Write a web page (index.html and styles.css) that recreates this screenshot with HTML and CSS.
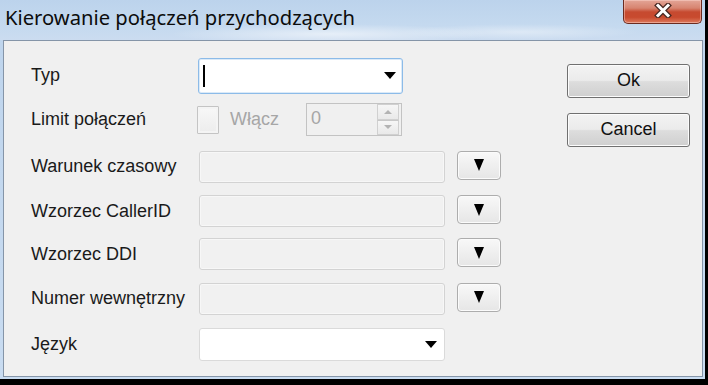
FILE: index.html
```html
<!DOCTYPE html>
<html lang="pl">
<head>
<meta charset="utf-8">
<title>Kierowanie połączeń przychodzących</title>
<link rel="stylesheet" href="styles.css">
</head>
<body>
<div class="window">
  <div class="titlebar">
    <span class="title">Kierowanie połączeń przychodzących</span>
    <button class="close" aria-label="Zamknij">
      <svg width="18" height="15" viewBox="0 0 18 15">
        <path d="M4 2.5 L14 12.5 M14 2.5 L4 12.5" stroke="#4a2a24" stroke-width="5.5" stroke-linecap="square" fill="none"/>
        <path d="M4 2.5 L14 12.5 M14 2.5 L4 12.5" stroke="#ffffff" stroke-width="3" stroke-linecap="square" fill="none"/>
      </svg>
    </button>
  </div>
  <div class="client">
    <div class="form">
      <span class="lbl">Typ</span>
      <div class="ctl">
        <div class="combo focus"><span class="caret"></span><span class="arrow"></span></div>
      </div>

      <span class="lbl">Limit połączeń</span>
      <div class="ctl limit">
        <span class="check"></span>
        <span class="check-text">Włącz</span>
        <div class="spin">
          <span class="spin-val">0</span>
          <span class="spin-btns">
            <span class="spin-up"><i class="tri-up"></i></span>
            <span class="spin-down"><i class="tri-down"></i></span>
          </span>
        </div>
      </div>

      <span class="lbl">Warunek czasowy</span>
      <div class="ctl">
        <span class="field"></span>
        <button class="pick"><i class="tri"></i></button>
      </div>

      <span class="lbl">Wzorzec CallerID</span>
      <div class="ctl">
        <span class="field"></span>
        <button class="pick"><i class="tri"></i></button>
      </div>

      <span class="lbl">Wzorzec DDI</span>
      <div class="ctl">
        <span class="field"></span>
        <button class="pick"><i class="tri"></i></button>
      </div>

      <span class="lbl">Numer wewnętrzny</span>
      <div class="ctl">
        <span class="field"></span>
        <button class="pick"><i class="tri"></i></button>
      </div>

      <span class="lbl">Język</span>
      <div class="ctl">
        <div class="combo wide"><span class="arrow"></span></div>
      </div>
    </div>
    <div class="actions">
      <button class="btn">Ok</button>
      <button class="btn">Cancel</button>
    </div>
  </div>
</div>
</body>
</html>
```
FILE: styles.css
```css
html, body {
  margin: 0;
  padding: 0;
  background: #000;
}
body {
  width: 708px;
  height: 385px;
  overflow: hidden;
  font-family: "Liberation Sans", Arial, sans-serif;
}
.window {
  width: 705px;
  height: 379px;
  background: linear-gradient(180deg, #c3d8ee 0%, #bfd5ed 12%, #c9dcf1 100%);
  display: flex;
  flex-direction: column;
}
.titlebar {
  height: 40px;
  display: flex;
  align-items: flex-start;
  background:
    radial-gradient(ellipse 160px 10px at 330px 34px, rgba(255,255,255,0.55), rgba(255,255,255,0) 100%),
    radial-gradient(ellipse 120px 8px at 520px 32px, rgba(255,255,255,0.4), rgba(255,255,255,0) 100%),
    linear-gradient(180deg, #bcd3ec 0%, #c4d9ef 60%, #cbdcf0 100%);
}
.title {
  font-family: "Noto Sans", "Open Sans", sans-serif;
  font-size: 20.2px;
  color: #0c0c0c;
  padding: 4px 0 0 5px;
  line-height: 26px;
  letter-spacing: 0;
}
.close {
  margin-left: auto;
  margin-right: 3px;
  width: 79px;
  height: 24px;
  padding: 0;
  border: 1px solid #6b2b20;
  border-top: none;
  border-radius: 0 0 5px 5px;
  background: linear-gradient(180deg, #e3a597 0%, #d78470 35%, #c64a30 52%, #c84a2e 75%, #dd7a5e 100%);
  box-shadow: inset 0 0 0 1px rgba(255,220,210,0.45);
  display: flex;
  align-items: center;
  justify-content: center;
}
.close svg { display: block; margin-top: -2px; }

.client {
  flex: 1;
  margin: 0 2px 2px 3px;
  border: 1px solid #8595a8;
  background: #f0f0f0;
  display: flex;
  box-sizing: border-box;
}
.form {
  padding: 14px 0 0 27px;
  display: grid;
  grid-template-columns: 167px auto;
  grid-template-rows: 41px 47px 47px 42px 44px 45px 46px;
  align-items: center;
}
.lbl {
  font-size: 18px;
  color: #1a1a1a;
  letter-spacing: 0;
  white-space: nowrap;
}
.ctl {
  display: flex;
  align-items: center;
}
.combo {
  box-sizing: border-box;
  width: 205px;
  height: 36px;
  background: #fff;
  border: 1px solid #c9d2dc;
  border-radius: 3px;
  display: flex;
  align-items: center;
  padding: 0 6px 0 4px;
}
.combo.focus {
  border-color: #8cbbe8;
  box-shadow: inset 0 0 0 1px #dbeaf8;
}
.combo.wide {
  width: 246px;
  height: 33px;
  margin-left: 1px;
  border-color: #dadada;
  padding-right: 7px;
}
.caret {
  width: 2px;
  height: 22px;
  background: #000;
}
.arrow {
  margin-left: auto;
  width: 0;
  height: 0;
  border-left: 6.5px solid transparent;
  border-right: 6.5px solid transparent;
  border-top: 7px solid #000;
}
.limit {
  width: 205px;
  margin-left: -1px;
}
.check {
  box-sizing: border-box;
  width: 22px;
  height: 28px;
  border: 1px solid #c4c4c4;
  border-radius: 1px;
  background: linear-gradient(180deg, #f8f8f8, #ececec);
  box-shadow: inset 0 0 0 2px #f4f4f4;
}
.check-text {
  margin-left: 11px;
  font-size: 18px;
  color: #a6a6a6;
}
.spin {
  margin-left: auto;
  box-sizing: border-box;
  width: 96px;
  height: 33px;
  border: 1px solid #c3c3c3;
  background: #f0f0f0;
  display: flex;
  align-items: center;
  padding: 0 2px 0 4px;
}
.spin-val {
  font-size: 18px;
  color: #a6a6a6;
  margin-top: -3px;
}
.spin-btns {
  margin-left: auto;
  width: 22px;
  height: 31px;
  display: flex;
  flex-direction: column;
}
.spin-up, .spin-down {
  flex: 1;
  box-sizing: border-box;
  border: 1px solid #d0d0d0;
  background: linear-gradient(180deg, #f6f6f6, #e9e9e9);
  display: flex;
  align-items: center;
  justify-content: center;
}
.spin-down { border-top: 1px solid #c8c8c8; }
.tri-up, .tri-down {
  width: 0;
  height: 0;
  border-left: 4px solid transparent;
  border-right: 4px solid transparent;
}
.tri-up { border-bottom: 4px solid #b3b3b3; }
.tri-down { border-top: 4px solid #b3b3b3; }

.field {
  box-sizing: border-box;
  width: 246px;
  height: 32px;
  margin-left: 1px;
  border: 1px solid #d3d3d3;
  border-radius: 3px;
  background: #f1f1f1;
  box-shadow: inset 0 0 0 1px #f7f7f7;
}
.pick {
  box-sizing: border-box;
  margin-left: 12px;
  margin-top: -3px;
  width: 44px;
  height: 29px;
  padding: 0;
  border: 1px solid #adadad;
  border-radius: 4px;
  background: linear-gradient(180deg, #f8f8f8 0%, #efefef 50%, #e6e6e6 100%);
  box-shadow: inset 0 0 0 1px #fbfbfb;
  display: flex;
  align-items: center;
  justify-content: center;
}
.tri {
  width: 0;
  height: 0;
  border-left: 5.5px solid transparent;
  border-right: 5.5px solid transparent;
  border-top: 12px solid #000;
}
.actions {
  margin-left: auto;
  padding: 23px 12px 0 0;
  display: flex;
  flex-direction: column;
  gap: 15px;
}
.btn {
  box-sizing: border-box;
  width: 123px;
  height: 34px;
  padding: 0 0 2px;
  border: 1px solid #707070;
  border-radius: 3px;
  background: linear-gradient(180deg, #f3f3f3 0%, #ebebeb 48%, #dddddd 52%, #cfcfcf 100%);
  box-shadow: inset 0 0 0 1px #fcfcfc;
  font-family: "Liberation Sans", Arial, sans-serif;
  font-size: 18px;
  color: #111;
}
```
